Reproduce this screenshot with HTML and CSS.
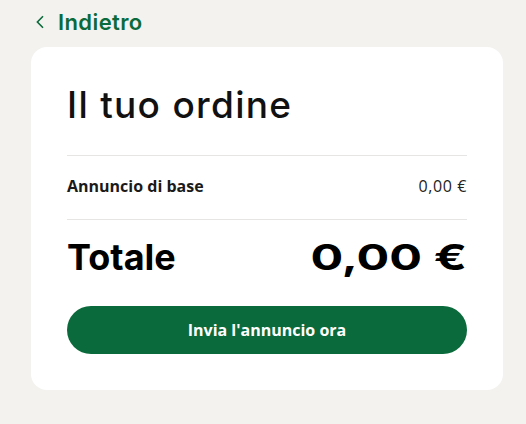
FILE: index.html
```html
<!DOCTYPE html>
<html lang="it">
<head>
<meta charset="utf-8">
<link rel="stylesheet" href="styles.css">
</head>
<body>
<div class="page">
  <a class="back" href="#">
    <svg class="chev" width="10" height="14" viewBox="0 0 10 14"><path d="M8 1.2 L2.4 7 L8 12.8" fill="none" stroke="#0b6a3b" stroke-width="1.6"/></svg>
    <span>Indietro</span>
  </a>
  <div class="card">
    <h1 class="title">Il tuo ordine</h1>
    <div class="row">
      <span class="label">Annuncio di base</span>
      <span class="price">0,00 €</span>
    </div>
    <div class="total">
      <span>Totale</span>
      <span class="total-amount">0,00 €</span>
    </div>
    <button class="cta">Invia l'annuncio ora</button>
  </div>
</div>
</body>
</html>
```
FILE: styles.css
```css
html, body { margin: 0; padding: 0; }
body {
  background: #f3f2ef;
  font-family: "Open Sans", Arial, sans-serif;
  color: #1a1a1a;
}
.page {
  padding: 8px 23px 0 31px;
}
.back {
  display: flex;
  align-items: center;
  gap: 13px;
  height: 28px;
  padding-left: 4px;
  color: #0b6a3b;
  text-decoration: none;
  font-family: "Inter", sans-serif;
  font-weight: 600;
  font-size: 22px;
  letter-spacing: 0.4px;
}
.chev { display: block; }
.card {
  margin-top: 11px;
  background: #fff;
  border-radius: 16px;
  padding: 36px;
  width: 400px;
}
.title {
  margin: 0;
  font-family: "Inter", sans-serif;
  font-weight: 500;
  font-size: 37px;
  letter-spacing: 1.3px;
  line-height: 36px;
  padding-top: 4px;
  padding-bottom: 32px;
  border-bottom: 1px solid #e6e5e3;
  color: #111;
}
.row {
  display: flex;
  justify-content: space-between;
  align-items: center;
  height: 64px;
  box-sizing: border-box;
  padding-bottom: 4px;
  border-bottom: 1px solid #e6e5e3;
  font-size: 16px;
}
.label { font-weight: 700; }
.price { color: #222; letter-spacing: 0.6px; }
.total {
  display: flex;
  justify-content: space-between;
  align-items: center;
  height: 74px;
  font-family: "Inter", sans-serif;
  font-weight: 700;
  font-size: 36px;
  color: #000;
}
.total-amount {
  display: inline-block;
  transform: scaleX(1.35);
  transform-origin: right center;
}
.cta {
  display: block;
  width: 100%;
  height: 48px;
  margin-top: 12px;
  border: 0;
  border-radius: 24px;
  background: #0b6a3b;
  color: #fff;
  font-family: "Open Sans", Arial, sans-serif;
  font-weight: 700;
  font-size: 16px;
}
```
